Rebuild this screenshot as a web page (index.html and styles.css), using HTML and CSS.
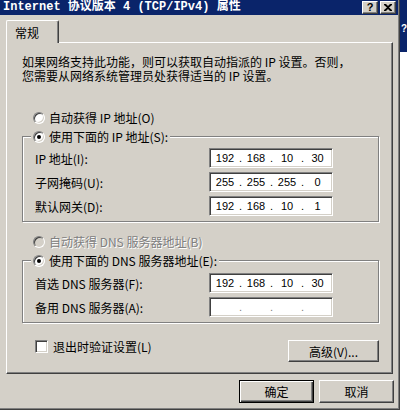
FILE: index.html
```html
<!DOCTYPE html>
<html lang="zh-CN">
<head>
  <meta charset="UTF-8">
  <title>Internet 协议版本 4 (TCP/IPv4) 属性</title>
  <link rel="stylesheet" href="styles.css">
</head>
<body>

  <div class="window">
    <div class="titlebar">
      <span class="title">Internet 协议版本 4 (TCP/IPv4) 属性</span>
      <div class="title-buttons">
        <span class="tbtn">?</span>
        <span class="tbtn">
          <svg width="8" height="7" viewBox="0 0 8 7"><path d="M0 0h2l2 2 2-2h2v1L5 3.5 8 6v1H6L4 5 2 7H0V6l3-2.5L0 1z" fill="#000"/></svg>
        </span>
      </div>
    </div>

    <div class="dialog">
      <div class="tabs">
        <div class="tab active">常规</div>
      </div>

      <div class="panel">
        <div class="intro">
          <div class="intro-line">如果网络支持此功能，则可以获取自动指派的 IP 设置。否则，</div>
          <div class="intro-line">您需要从网络系统管理员处获得适当的 IP 设置。</div>
        </div>

        <label class="option first"><span class="radio"></span>自动获得 IP 地址(O)</label>

        <fieldset class="group">
          <legend><label class="option"><span class="radio checked"></span>使用下面的 IP 地址(S):</label></legend>
          <div class="field">
            <span>IP 地址(I):</span>
            <div class="ipbox"><span>192</span><i>.</i><span>168</span><i>.</i><span>10</span><i>.</i><span>30</span></div>
          </div>
          <div class="field">
            <span>子网掩码(U):</span>
            <div class="ipbox"><span>255</span><i>.</i><span>255</span><i>.</i><span>255</span><i>.</i><span>0</span></div>
          </div>
          <div class="field">
            <span>默认网关(D):</span>
            <div class="ipbox"><span>192</span><i>.</i><span>168</span><i>.</i><span>10</span><i>.</i><span>1</span></div>
          </div>
        </fieldset>

        <label class="option second disabled"><span class="radio"></span>自动获得 DNS 服务器地址(B)</label>

        <fieldset class="group dns">
          <legend><label class="option"><span class="radio checked"></span>使用下面的 DNS 服务器地址(E):</label></legend>
          <div class="field">
            <span>首选 DNS 服务器(F):</span>
            <div class="ipbox"><span>192</span><i>.</i><span>168</span><i>.</i><span>10</span><i>.</i><span>30</span></div>
          </div>
          <div class="field">
            <span>备用 DNS 服务器(A):</span>
            <div class="ipbox empty"><span></span><i>.</i><span></span><i>.</i><span></span><i>.</i><span></span></div>
          </div>
        </fieldset>

        <div class="bottom-row">
          <label class="check"><span class="checkbox"></span>退出时验证设置(L)</label>
          <button class="btn advanced">高级(V)...</button>
        </div>
      </div>

      <div class="actions">
        <button class="btn default">确定</button>
        <button class="btn">取消</button>
      </div>
    </div>
  </div>

  <div class="peek">?</div>

</body>
</html>
```

FILE: styles.css
```css
* {
  box-sizing: border-box;
}
body {
  margin: 0;
  background: #fff;
  display: flex;
  align-items: flex-start;
  font-family: "Noto Sans CJK SC", sans-serif;
  font-size: 12px;
  color: #000;
}

.window {
  width: 400px;
  height: 410px;
  padding: 0 2px 2px 0;
  background: #d4d0c8;
  box-shadow: inset -1px -1px 0 #404040, inset -2px -2px 0 #808080;
}

.titlebar {
  height: 15px;
  background: #0a246a;
  display: flex;
  justify-content: space-between;
  align-items: flex-start;
}

.title {
  padding-left: 3px;
  line-height: 15px;
  color: #fff;
  font-family: "Liberation Mono", "Noto Sans CJK SC", monospace;
  font-weight: bold;
  font-size: 12px;
  white-space: nowrap;
}

.title-buttons {
  display: flex;
  gap: 2px;
  margin: 1px 2px 0 0;
}

.tbtn {
  width: 16px;
  height: 13px;
  display: flex;
  justify-content: center;
  align-items: center;
  background: #d4d0c8;
  border: 1px solid;
  border-color: #fff #404040 #404040 #fff;
  box-shadow: inset -1px -1px 0 #808080;
  font-family: "Liberation Sans", sans-serif;
  font-weight: bold;
  font-size: 11px;
  line-height: 1;
}

.dialog {
  padding: 5px 4px 0 6px;
}

.tabs {
  display: flex;
}

.tab {
  position: relative;
  z-index: 1;
  width: 53px;
  height: 23px;
  margin-bottom: -1px;
  padding: 2px 0 0 8px;
  line-height: 20px;
  background: #d4d0c8;
  border: 1px solid;
  border-color: #fff #404040 transparent #fff;
  border-bottom: none;
  border-radius: 2px 2px 0 0;
  box-shadow: inset -1px 0 0 #808080;
}

.panel {
  width: 387px;
  height: 332px;
  padding: 12px 13px 0 15px;
  border: 1px solid;
  border-color: #fff #404040 #404040 #fff;
  box-shadow: inset -1px -1px 0 #808080;
}

.intro {
  display: flex;
  flex-direction: column;
  white-space: nowrap;
}

.intro-line {
  height: 14px;
  line-height: 14px;
}

.option {
  display: flex;
  align-items: center;
  gap: 4px;
  height: 15px;
  line-height: 15px;
  white-space: nowrap;
}

.option.first {
  margin-top: 27px;
  padding-left: 11px;
}

.option.second {
  margin-top: 12px;
  padding-left: 11px;
}

.option.disabled {
  color: #808080;
  text-shadow: 1px 1px 0 #fff;
}

.radio {
  flex: none;
  width: 12px;
  height: 12px;
  border-radius: 50%;
  border: 1px solid;
  border-color: #808080 #fff #fff #808080;
  background: #fff;
  box-shadow: inset 1px 1px 0 #404040, inset -1px -1px 0 #d4d0c8;
  display: flex;
  justify-content: center;
  align-items: center;
}

.option.disabled .radio {
  background: #d4d0c8;
}

.radio.checked::after {
  content: "";
  width: 4px;
  height: 4px;
  border-radius: 50%;
  background: #000;
}

.group {
  margin: 4px 0 0;
  padding: 4px 0 5px 12px;
  border: 1px solid #808080;
  box-shadow: 1px 1px 0 #fff, inset 1px 1px 0 #fff;
  display: flex;
  flex-direction: column;
  gap: 4px;
}

.group.dns {
  padding-top: 5px;
}

.group legend {
  margin-left: -4px;
  padding: 0 2px;
  background: #d4d0c8;
}

.field {
  display: grid;
  grid-template-columns: 174px 124px;
  align-items: center;
  height: 20px;
  white-space: nowrap;
}

.ipbox {
  height: 20px;
  display: grid;
  grid-template-columns: 28px 3px 28px 3px 28px 3px 27px;
  align-items: center;
  padding: 1px;
  background: #fff;
  border: 1px solid;
  border-color: #808080 #fff #fff #808080;
  box-shadow: inset 1px 1px 0 #404040, inset -1px -1px 0 #d4d0c8;
  font-family: "Liberation Sans", sans-serif;
  font-size: 11px;
}

.ipbox span {
  text-align: center;
}

.ipbox i {
  font-style: normal;
  text-align: center;
}

.ipbox.empty i {
  color: #808080;
}

.bottom-row {
  display: flex;
  justify-content: space-between;
  align-items: flex-start;
  margin-top: 17px;
  padding-left: 13px;
}

.check {
  display: flex;
  align-items: center;
  gap: 5px;
  height: 13px;
  white-space: nowrap;
}

.checkbox {
  width: 13px;
  height: 13px;
  background: #fff;
  border: 1px solid;
  border-color: #808080 #fff #fff #808080;
  box-shadow: inset 1px 1px 0 #404040, inset -1px -1px 0 #d4d0c8;
}

.btn {
  width: 75px;
  height: 23px;
  padding: 0;
  background: #d4d0c8;
  border: 1px solid;
  border-color: #fff #404040 #404040 #fff;
  box-shadow: inset -1px -1px 0 #808080;
  font-family: "Noto Sans CJK SC", sans-serif;
  font-size: 12px;
  color: #000;
}

.btn.advanced {
  width: 91px;
  height: 22px;
}

.btn.default {
  border: 1px solid #000;
  box-shadow: inset 1px 1px 0 #fff, inset -1px -1px 0 #404040, inset -2px -2px 0 #808080;
}

.actions {
  display: flex;
  justify-content: flex-end;
  gap: 5px;
  margin-top: 6px;
}

.peek {
  width: 7px;
  height: 52px;
  background: #0a246a;
  color: #fff;
  font-family: "Liberation Sans", sans-serif;
  font-weight: bold;
  font-size: 10px;
  padding: 23px 0 0 1px;
  overflow: hidden;
}
```
